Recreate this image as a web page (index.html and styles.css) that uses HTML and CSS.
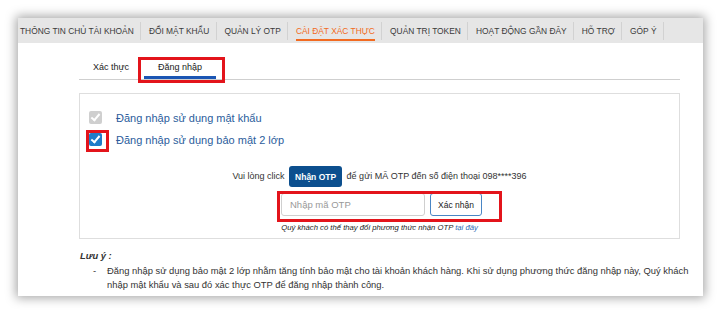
FILE: index.html
```html
<!DOCTYPE html>
<html lang="vi">
<head>
    <meta charset="UTF-8">
    <meta name="viewport" content="width=device-width, initial-scale=1.0">
    <title>Cài đặt xác thực</title>
    <link rel="stylesheet" href="styles.css">
</head>
<body>
    <div class="card">
        <div class="nav">
            <div class="nav-item first">THÔNG TIN CHỦ TÀI KHOẢN</div>
            <div class="nav-item">ĐỔI MẬT KHẨU</div>
            <div class="nav-item">QUẢN LÝ OTP</div>
            <div class="nav-item active"><span>CÀI ĐẶT XÁC THỰC</span></div>
            <div class="nav-item">QUẢN TRỊ TOKEN</div>
            <div class="nav-item">HOẠT ĐỘNG GẦN ĐÂY</div>
            <div class="nav-item">HỖ TRỢ</div>
            <div class="nav-item">GÓP Ý</div>
        </div>

        <div class="content">
            <div class="subtabs">
                <div class="subtab">Xác thực</div>
                <div class="subtab selected marked">Đăng nhập</div>
            </div>

            <div class="panel">
                <div class="check-row">
                    <span class="check disabled"></span>
                    <span class="check-label">Đăng nhập sử dụng mật khẩu</span>
                </div>
                <div class="check-row">
                    <span class="check on marked-check"></span>
                    <span class="check-label">Đăng nhập sử dụng bảo mật 2 lớp</span>
                </div>

                <div class="otp-line">
                    Vui lòng click <button class="btn-otp">Nhận OTP</button> để gửi MÃ OTP đến số điện thoại 098****396
                </div>
                <div class="otp-wrap">
                    <div class="otp-form">
                        <input type="text" class="otp-input" placeholder="Nhập mã OTP">
                        <button class="btn-confirm">Xác nhận</button>
                    </div>
                </div>
                <div class="otp-note">Quý khách có thể thay đổi phương thức nhận OTP <a href="#">tại đây</a></div>
            </div>

            <div class="notes">
                <div class="notes-title">Lưu ý :</div>
                <ul class="notes-list">
                    <li>Đăng nhập sử dụng bảo mật 2 lớp nhằm tăng tính bảo mật cho tài khoản khách hàng. Khi sử dụng phương thức đăng nhập này, Quý khách nhập mật khẩu và sau đó xác thực OTP để đăng nhập thành công.</li>
                </ul>
            </div>
        </div>
    </div>
</body>
</html>
```

FILE: styles.css
```css
body {
    margin: 0;
    padding: 18px;
    background-color: #fff;
    font-family: Arial, "Liberation Sans", sans-serif;
    color: #333;
}
.card {
    width: 685px;
    height: 278px;
    background-color: #fff;
    box-shadow: 0 0 10px 2px rgba(0, 0, 0, 0.35);
    overflow: hidden;
}
.nav {
    display: flex;
    align-items: center;
    height: 25px;
    background-color: #e6e6e6;
}
.nav-item {
    font-size: 8.4px;
    color: #3a3a3a;
    padding: 0 6.5px 0 7.7px;
    height: 18px;
    line-height: 18px;
    border-right: 1px solid #d2d2d2;
    white-space: nowrap;
}
.nav-item.first {
    padding-left: 2px;
}
.nav-item.active {
    color: #f26b21;
}
.nav-item.active span {
    display: inline-block;
    border-bottom: 2px solid #f26b21;
    line-height: 16px;
}
.content {
    margin: 0 23px 0 61px;
}
.subtabs {
    display: flex;
    margin-top: 16px;
    border-bottom: 1px solid #cfcfcf;
}
.subtab {
    font-size: 9px;
    color: #222;
    padding: 2px 14px 0;
    height: 18px;
    line-height: 12px;
    position: relative;
}
.subtab.selected {
    border-bottom: 3px solid #1b56b4;
    height: 15px;
    margin-left: 1px;
}
.marked::after {
    content: "";
    position: absolute;
    left: -6px;
    right: -9px;
    top: -2px;
    bottom: -7px;
    border: 3px solid #e3141b;
}
.panel {
    margin-top: 13px;
    border: 1px solid #dedede;
    padding: 17px 9px 6px;
}
.check-row {
    display: flex;
    align-items: center;
    height: 13px;
    margin-bottom: 9px;
}
.check {
    width: 13px;
    height: 13px;
    border-radius: 2px;
    position: relative;
    flex: none;
}
.check::before {
    content: "";
    position: absolute;
    left: 4px;
    top: 1px;
    width: 3px;
    height: 7px;
    border: solid #fff;
    border-width: 0 2px 2px 0;
    transform: rotate(40deg);
}
.check.disabled {
    background-color: #cfcfcf;
}
.check.on {
    background-color: #1f7cc8;
}
.marked-check::after {
    content: "";
    position: absolute;
    left: -3px;
    top: -3px;
    width: 17px;
    height: 16px;
    border: 3px solid #e3141b;
}
.check-label {
    font-size: 11px;
    color: #2b5d9c;
    margin-left: 14px;
}
.otp-line {
    margin-top: 20px;
    text-align: center;
    font-size: 9px;
    color: #333;
    height: 21px;
    line-height: 21px;
}
.btn-otp {
    font-family: inherit;
    font-size: 8.5px;
    font-weight: bold;
    color: #fff;
    background-color: #0c4f8e;
    border: none;
    border-radius: 3px;
    width: 53px;
    height: 21px;
    padding: 0;
    margin: 0 2px;
    white-space: nowrap;
    vertical-align: top;
}
.otp-wrap {
    display: flex;
    justify-content: center;
    padding-left: 4px;
    margin-top: 6px;
}
.otp-form {
    display: flex;
    gap: 5px;
    position: relative;
}
.otp-form::after {
    content: "";
    position: absolute;
    left: -4px;
    right: -20px;
    top: -2px;
    bottom: -6px;
    border: 3px solid #e3141b;
}
.otp-input {
    width: 144px;
    height: 23px;
    box-sizing: border-box;
    border: 1px solid #cfcfcf;
    border-radius: 3px;
    padding: 0 8px;
    font-family: inherit;
    font-size: 9.5px;
    flex: none;
}
.otp-input::placeholder {
    color: #999;
}
.btn-confirm {
    width: 52px;
    height: 23px;
    flex: none;
    padding: 0;
    font-family: inherit;
    font-size: 8.5px;
    color: #222;
    background-color: #fff;
    border: 1px solid #4a86c5;
    border-radius: 3px;
    white-space: nowrap;
}
.otp-note {
    text-align: center;
    font-size: 7.7px;
    font-style: italic;
    color: #222;
    margin-top: 7px;
}
.otp-note a {
    color: #2b6cb6;
    text-decoration: none;
}
.notes {
    margin: 10px -16px 0 0;
    font-size: 9.4px;
    line-height: 14.5px;
    padding-left: 1px;
}
.notes-title {
    font-weight: bold;
    font-style: italic;
}
.notes-list {
    margin: 0;
    padding-left: 27px;
    list-style: none;
}
.notes-list li {
    position: relative;
}
.notes-list li::before {
    content: "-";
    position: absolute;
    left: -14px;
}
```
